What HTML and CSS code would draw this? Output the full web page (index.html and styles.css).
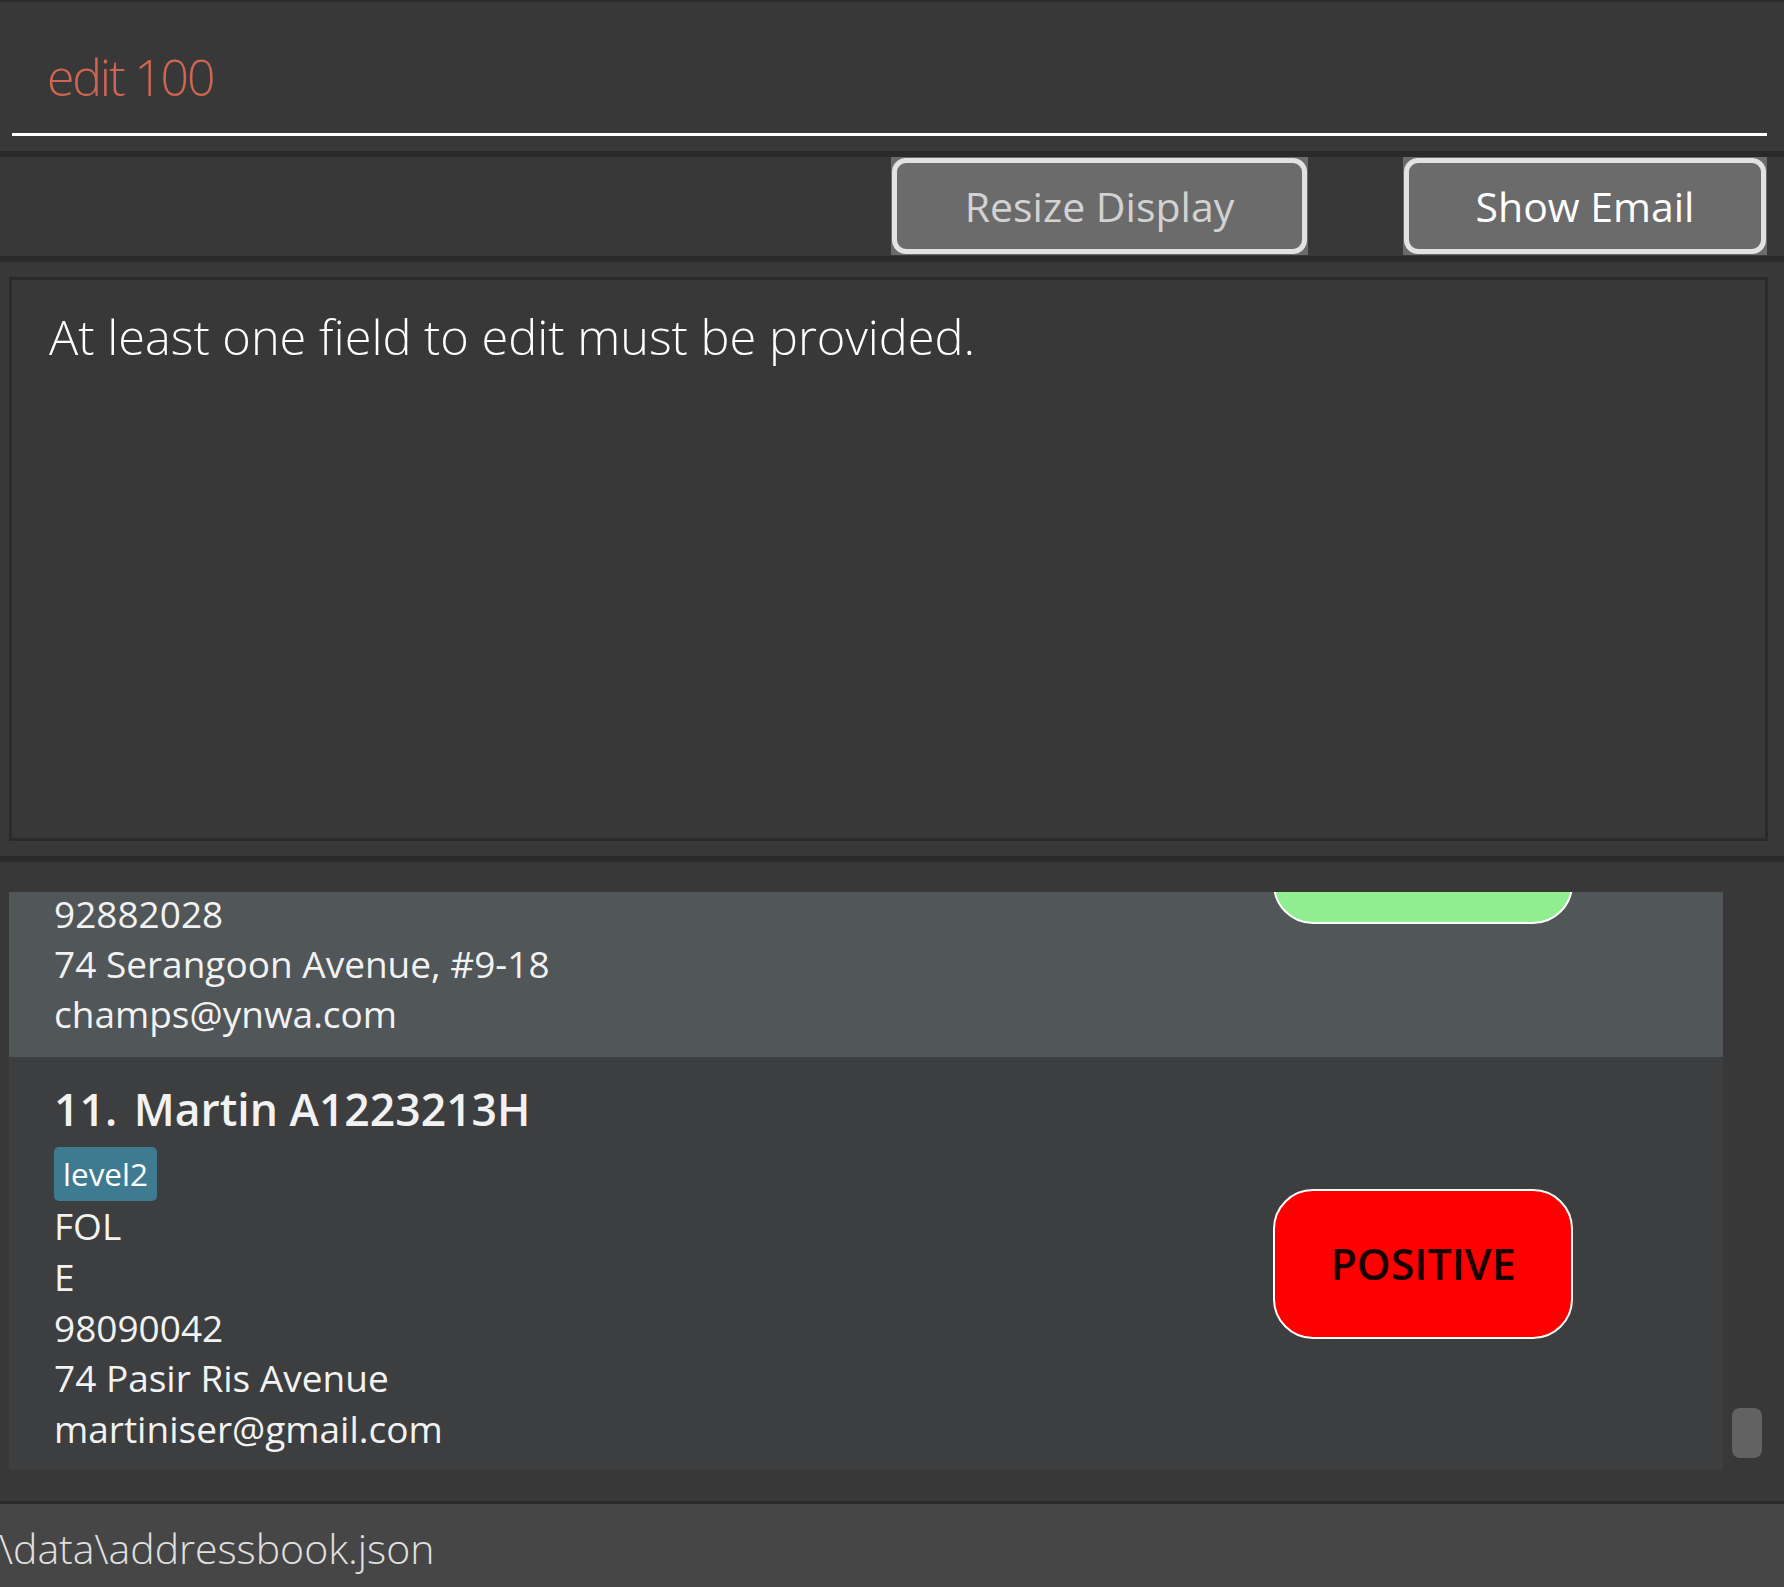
FILE: index.html
```html
<!DOCTYPE html>
<html lang="en">
<head>
<meta charset="utf-8">
<title>Address Book</title>
<link rel="stylesheet" href="styles.css">
</head>
<body>
<div class="app">
  <div class="top-line"></div>

  <div class="command-box">
    <div class="command-input error">edit 100</div>
  </div>

  <div class="sep"></div>

  <div class="button-row">
    <button class="btn btn-resize"><span class="btn-face">Resize Display</span></button>
    <button class="btn btn-email"><span class="btn-face">Show Email</span></button>
  </div>

  <div class="sep"></div>

  <div class="result-panel">
    <div class="result-box">At least one field to edit must be provided.</div>
  </div>

  <div class="sep"></div>

  <div class="list-panel">
    <div class="list-viewport">
      <div class="card card-odd card-partial">
        <div class="card-info card-info-partial">
          <div class="card-line card-line-first">92882028</div>
          <div class="card-line">74 Serangoon Avenue, #9-18</div>
          <div class="card-line">champs@ynwa.com</div>
        </div>
        <div class="badge-clip"><div class="status-badge badge-negative"></div></div>
      </div>
      <div class="card card-even">
        <div class="card-info">
          <div class="card-name"><span class="card-id">11.</span> Martin A1223213H</div>
          <div class="tags"><span class="tag">level2</span></div>
          <div class="card-line">FOL</div>
          <div class="card-line">E</div>
          <div class="card-line">98090042</div>
          <div class="card-line">74 Pasir Ris Avenue</div>
          <div class="card-line">martiniser@gmail.com</div>
        </div>
        <div class="status-badge badge-positive">POSITIVE</div>
      </div>
    </div>
    <div class="scroll-track"><div class="scroll-thumb"></div></div>
  </div>

  <div class="sep sep-thin"></div>

  <div class="status-bar"><span class="status-path">\data\addressbook.json</span></div>
</div>
</body>
</html>
```
FILE: styles.css
```css
html, body {
  margin: 0;
  padding: 0;
  background: #383838;
}

body {
  font-family: "Open Sans", "Noto Sans", sans-serif;
  color: #ffffff;
}

.app {
  width: 1784px;
  height: 1587px;
  display: flex;
  flex-direction: column;
  overflow: hidden;
  background: #383838;
}

.top-line {
  height: 2px;
  background: #2b2b2b;
  flex: none;
}

.sep {
  height: 6px;
  background: #2a2a2a;
  flex: none;
}

.sep-thin {
  height: 3px;
}

/* command box */
.command-box {
  flex: none;
  padding: 0 17px 15px 12px;
}

.command-input {
  padding: 41px 0 22px 35px;
  border-bottom: 3px solid #ffffff;
  font-size: 50px;
  font-weight: 300;
  line-height: 68px;
  letter-spacing: -2.2px;
  white-space: nowrap;
}

.error {
  color: #d06651;
}

/* buttons */
.button-row {
  flex: none;
  height: 99px;
  display: flex;
  justify-content: flex-end;
  align-items: flex-start;
  gap: 95px;
  padding-right: 17px;
}

.btn {
  height: 98px;
  padding: 1px;
  margin: 0;
  border: none;
  background: #6b6b6b;
  font-family: "Open Sans", "Noto Sans", sans-serif;
  font-size: 41px;
  font-weight: 400;
  box-sizing: border-box;
}

.btn-resize {
  width: 417px;
  color: #d2d2d2;
}

.btn-email {
  width: 364px;
  color: #ffffff;
}

.btn-face {
  display: flex;
  align-items: center;
  justify-content: center;
  height: 100%;
  box-sizing: border-box;
  border: 5px solid #e2e2e2;
  border-radius: 14px;
  white-space: nowrap;
}

/* result display */
.result-panel {
  flex: none;
  height: 594px;
  box-sizing: border-box;
  padding: 15px 16px 15px 9px;
  display: flex;
}

.result-box {
  flex: 1;
  border: 3px solid #2a2a2a;
  padding: 23px 37px;
  font-size: 48.7px;
  font-weight: 300;
  line-height: 66px;
  color: #ffffff;
}

/* person list */
.list-panel {
  flex: none;
  height: 639px;
  box-sizing: border-box;
  padding: 30px 14px 31px 9px;
  display: flex;
}

.list-viewport {
  flex: 1;
  display: flex;
  flex-direction: column;
}

.card {
  flex: none;
  height: 413px;
  box-sizing: border-box;
  display: flex;
  align-items: center;
  padding: 0 150px 0 45px;
}

.card-partial {
  height: 165px;
  align-items: flex-start;
}

.card-odd {
  background: #515658;
}

.card-even {
  background: #3c3e3f;
}

.card-info {
  flex: 1;
  align-self: flex-start;
  padding: 22px 0 15px;
  color: #f2f2f2;
}

.card-info-partial {
  padding: 0;
}

.card-name {
  font-size: 44.5px;
  font-weight: 600;
  line-height: 60px;
  white-space: nowrap;
}

.card-id {
  margin-right: 5px;
}

.tags {
  margin-top: 8px;
  height: 54px;
  display: flex;
}

.tag {
  background: #3e7b91;
  color: #ffffff;
  font-size: 31.5px;
  font-weight: 500;
  line-height: 54px;
  padding: 0 9px;
  border-radius: 5px;
}

.card-line {
  font-size: 37px;
  line-height: 50.8px;
  white-space: nowrap;
}

.card-line-first {
  line-height: 44px;
  padding-bottom: 2.6px;
}

.status-badge {
  flex: none;
  width: 300px;
  height: 150px;
  box-sizing: border-box;
  border: 2.5px solid #ffffff;
  border-radius: 40px;
  display: flex;
  align-items: center;
  justify-content: center;
  font-size: 43px;
  font-weight: 600;
  color: #1a0000;
}

.badge-clip {
  width: 300px;
  height: 32px;
  overflow: hidden;
}

.badge-clip .status-badge {
  margin-top: -118px;
}

.badge-positive {
  background: #ff0000;
}

.badge-negative {
  background: #90ee90;
}

.scroll-track {
  width: 47px;
  display: flex;
  flex-direction: column;
  justify-content: flex-end;
}

.scroll-thumb {
  width: 30px;
  height: 50px;
  margin: 0 0 12px 9px;
  border-radius: 8px;
  background: #626262;
}

/* status bar */
.status-bar {
  flex: 1;
  background: #464646;
  padding-top: 16px;
  overflow: hidden;
}

.status-path {
  display: block;
  margin-left: -1px;
  font-size: 41px;
  font-weight: 300;
  line-height: 56px;
  color: #e0e0e0;
  white-space: nowrap;
}
```
